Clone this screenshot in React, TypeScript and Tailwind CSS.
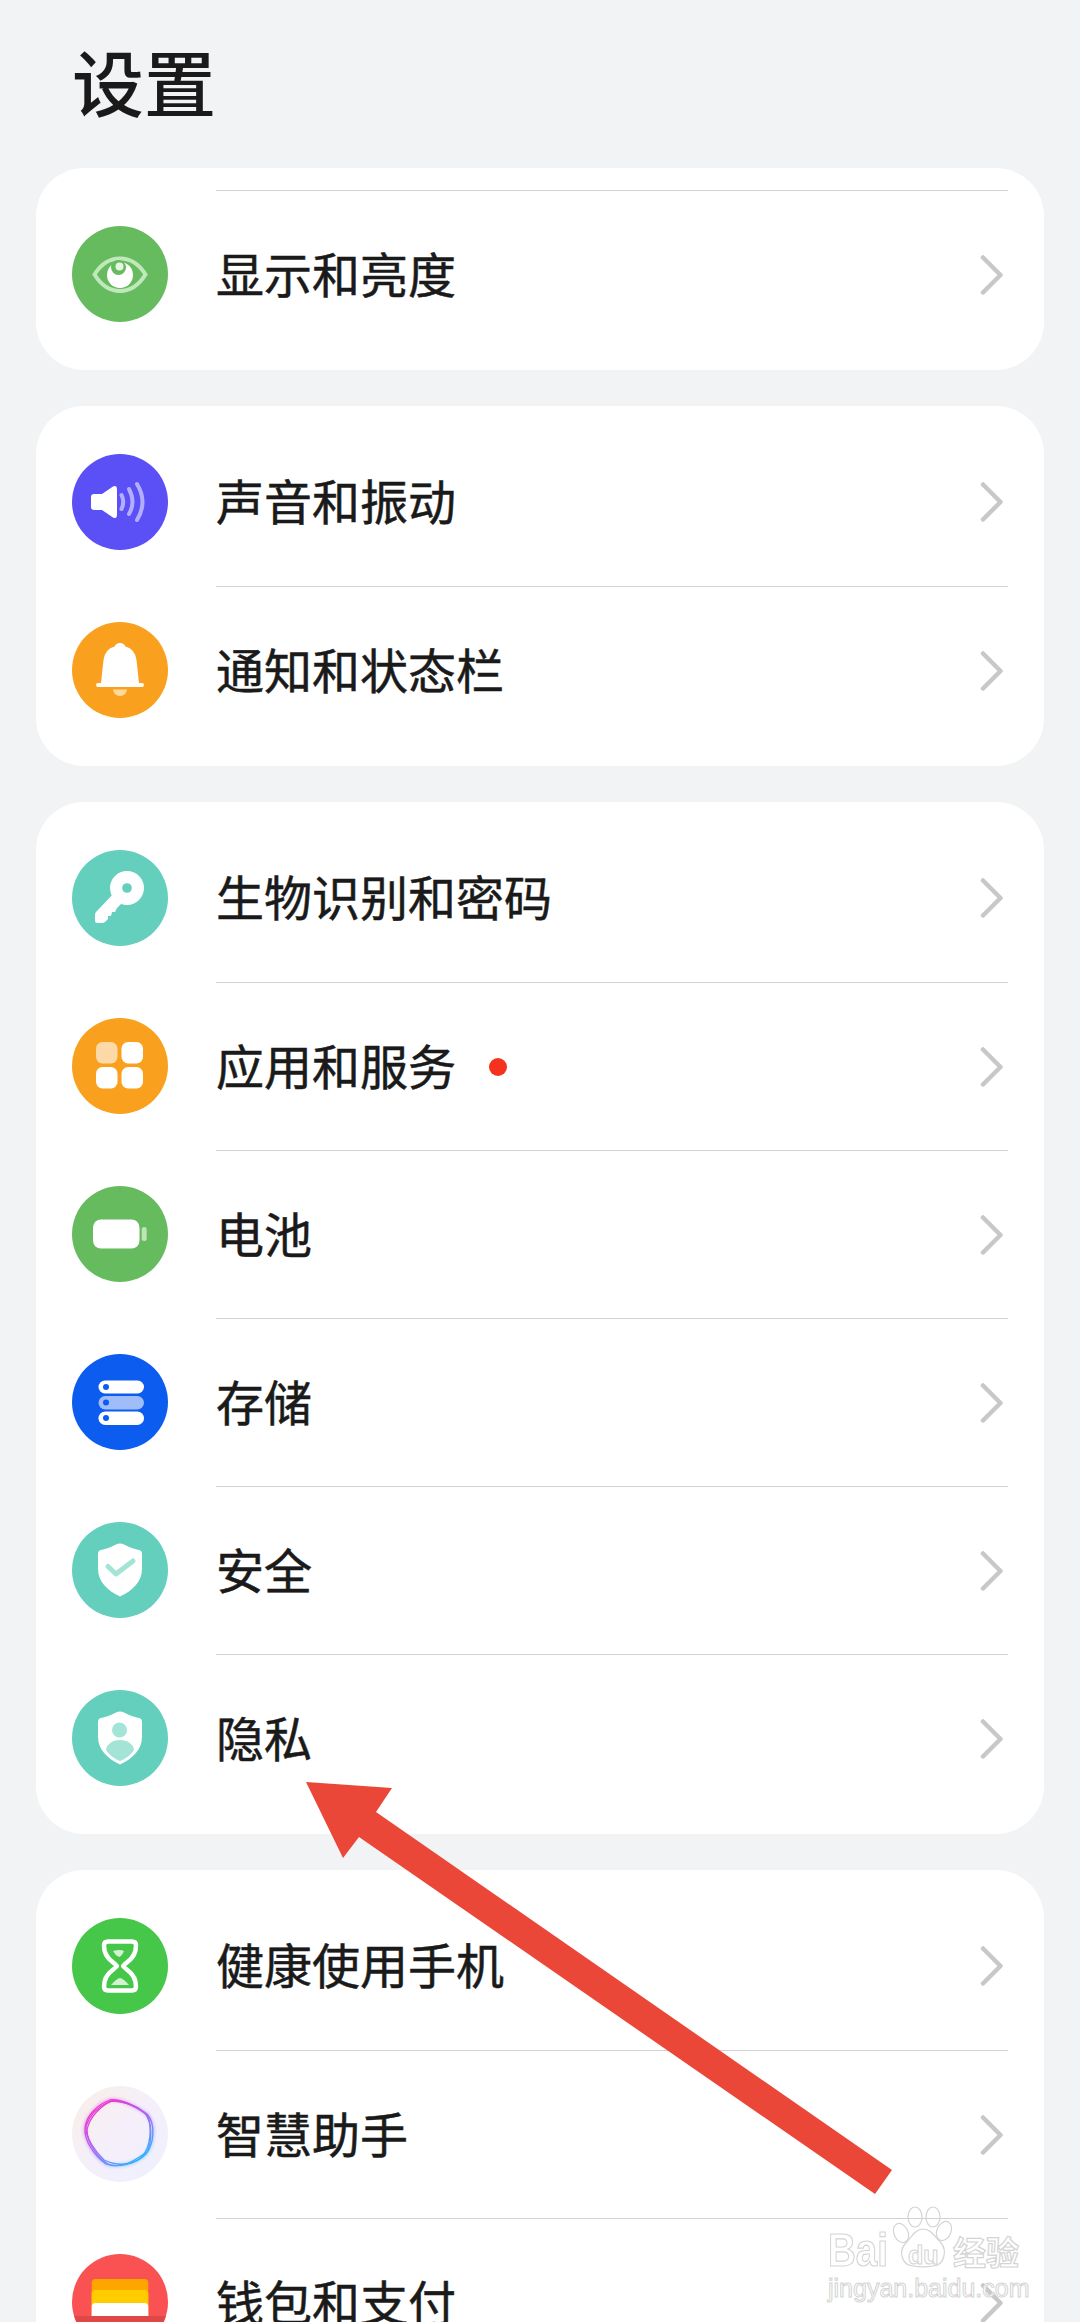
import type { ReactNode } from 'react';

const TEAL = '#64cfbd';
const SHIELD = 'M48 21.500Q51 21.500 54 23.500C58 26 63 27 67 28Q70 28.700 70 32V47C70 60 60 69 48 74.500C36 69 26 60 26 47V32Q26 28.700 29 28C33 27 38 26 42 23.500Q45 21.500 48 21.500Z';

function Circle({ bg, children }: { bg: string; children: ReactNode }) {
  return (
    <div className="h-24 w-24 shrink-0 overflow-hidden rounded-full" style={{ backgroundColor: bg }}>
      <svg viewBox="0 0 96 96" className="h-24 w-24" fill="none">
        {children}
      </svg>
    </div>
  );
}

const EyeIcon = () => (
  <Circle bg="#66bb5f">
    <path d="M22.500 48.500C29 38 38 32.500 48 32.500S67 38 73.500 48.500C67 59 58 65 48 65S29 59 22.500 48.500Z" stroke="#c0e8bb" strokeWidth="4" />
    <circle cx="48" cy="49" r="13" fill="#fff" />
    <circle cx="46.500" cy="41.500" r="7.500" fill="#66bb5f" />
    <circle cx="47.500" cy="40.500" r="4" fill="#e4f5e2" />
  </Circle>
);

const SoundIcon = () => (
  <Circle bg="#5a50f5">
    <path d="M22 40h8l11-7.500q4-2 4 3v25q0 5-4 3L30 56h-8q-3 0-3-3V43q0-3 3-3Z" fill="#fff" />
    <g stroke="#b3aeff" strokeWidth="4" strokeLinecap="round">
      <path d="M49.500 41Q53 48 49.500 55" />
      <path d="M57 35Q64 48 57 60" />
      <path d="M65 30Q76 48 65 66" />
    </g>
  </Circle>
);

const BellIcon = () => (
  <Circle bg="#f9a11e">
    <path d="M48 21q4 0 5.500 3.500Q63 27 64.500 38L67 61h3q2 0 2 2t-2 2H26q-2 0-2-2t2-2h3l2.500-23Q33 27 42.500 24.500 44 21 48 21Z" fill="#fff" />
    <path d="M41 67.500h14Q54 74 48 74t-7-6.500Z" fill="#fdd9a0" />
  </Circle>
);

const KeyIcon = () => (
  <Circle bg={TEAL}>
    <path d="M43 42 24 62q-1 1-1 3v6q0 2 2 2h5q2 0 3-1l3-3v-3h3l1-4h3l2-4 8-8Z" fill="#fff" />
    <circle cx="55" cy="38" r="17" fill="#fff" />
    <circle cx="55" cy="38" r="4.800" fill={TEAL} />
  </Circle>
);

const AppsIcon = () => (
  <Circle bg="#f9a11e">
    <rect x="24" y="24" width="21.500" height="21.500" rx="6.500" fill="#fdd9a8" />
    <rect x="49.500" y="24" width="21.500" height="21.500" rx="6.500" fill="#fff" />
    <rect x="24" y="49" width="21.500" height="21.500" rx="6.500" fill="#fff" />
    <rect x="49.500" y="49" width="21.500" height="21.500" rx="6.500" fill="#fff" />
  </Circle>
);

const BatteryIcon = () => (
  <Circle bg="#66bb5f">
    <rect x="21" y="33.500" width="46.500" height="29" rx="8" fill="#fff" />
    <rect x="69.700" y="41" width="5" height="14" rx="2.500" fill="#bde5b8" />
  </Circle>
);

const StorageIcon = () => (
  <Circle bg="#0d5cf0">
    <rect x="26.500" y="26.500" width="45.500" height="13" rx="6.500" fill="#fff" />
    <rect x="26.500" y="42" width="45.500" height="13.500" rx="6.750" fill="#9ebdf9" />
    <rect x="26.500" y="57.500" width="45.500" height="13.500" rx="6.750" fill="#fff" />
    <circle cx="34" cy="33" r="3" fill="#0d5cf0" />
    <circle cx="34" cy="48.500" r="3" fill="#0d5cf0" />
    <circle cx="34" cy="64" r="3" fill="#0d5cf0" />
  </Circle>
);

const SafeIcon = () => (
  <Circle bg={TEAL}>
    <path d={SHIELD} fill="#fff" />
    <path d="M36 44.500 44 52 61 39" stroke="#a3e4d7" strokeWidth="5" strokeLinecap="round" strokeLinejoin="round" />
  </Circle>
);

const PrivacyIcon = () => (
  <Circle bg={TEAL}>
    <path d={SHIELD} fill="#fff" />
    <circle cx="47.500" cy="40" r="7.500" fill="#a3e4d7" />
    <path d="M48 50c8 0 14 5 14 10-3 5-9 9-14 11-5-2-11-6-14-11 0-5 6-10 14-10Z" fill="#a3e4d7" />
  </Circle>
);

const HourglassIcon = () => (
  <Circle bg="#46c74a">
    <path
      d="M36 23.500h24q4 0 4 4 0 10-8 16-5 4-5 4.500t5 4.500q8 6 8 16 0 4-4 4H36q-4 0-4-4 0-10 8-16 5-4 5-4.500t-5-4.500q-8-6-8-16 0-4 4-4Z"
      stroke="#fff"
      strokeWidth="4.500"
    />
    <path d="M41 33q7-2 11 0-2 5-5 6-4-2-6-6Z" fill="#d3f2d4" />
    <path d="M39 67q5-6 9-7 4 1 9 7Z" fill="#d3f2d4" />
  </Circle>
);

const RING_A = 'M38 14C50 12 66 22 75 28C84 38 82 58 74 68C64 78 46 82 34 78C22 70 12 54 13 42C14 30 26 18 38 14Z';
const RING_B = 'M40 15C52 15 64 20 72 26C81 36 80 56 75 66C66 72 54 82 38 79C26 74 15 56 15 44C17 32 28 20 40 15Z';
const RING_C = 'M36 16C46 13 62 18 76 30C80 42 79 60 70 71C60 80 44 80 32 74C24 66 13 52 14 40C18 28 28 20 36 16Z';

const AssistantIcon = () => (
  <div className="h-24 w-24 shrink-0 rounded-full bg-gradient-to-br from-[#f8efe6] via-[#f5effb] to-[#edf1fd]">
    <svg viewBox="0 0 96 96" className="h-24 w-24" fill="none">
      <defs>
        <linearGradient id="ring" x1="0.2" y1="0.05" x2="0.8" y2="0.95">
          <stop offset="0" stopColor="#f02fd0" />
          <stop offset="0.5" stopColor="#a868f5" />
          <stop offset="1" stopColor="#2fb0ff" />
        </linearGradient>
      </defs>
      <path d={RING_A} stroke="url(#ring)" strokeWidth="3.500" opacity="0.35" className="blur-[1.5px]" />
      <g stroke="url(#ring)" strokeWidth="1.300">
        <path d={RING_A} />
        <path d={RING_B} />
        <path d={RING_C} />
      </g>
    </svg>
  </div>
);

const WalletIcon = () => (
  <Circle bg="#fa5252">
    <rect x="19.700" y="25" width="56.600" height="30" rx="4" fill="#ffa500" />
    <rect x="19.700" y="36" width="56.600" height="30" rx="4" fill="#ffcc00" />
    <rect x="19.700" y="49" width="56.600" height="20" rx="4" fill="#fff" />
    <rect x="0" y="62" width="96" height="34" fill="#e04848" />
  </Circle>
);

type Item = { icon: ReactNode; label: string; dot?: boolean };

const groups: { items: Item[]; topLine?: boolean }[] = [
  { topLine: true, items: [{ icon: <EyeIcon />, label: '显示和亮度' }] },
  {
    items: [
      { icon: <SoundIcon />, label: '声音和振动' },
      { icon: <BellIcon />, label: '通知和状态栏' },
    ],
  },
  {
    items: [
      { icon: <KeyIcon />, label: '生物识别和密码' },
      { icon: <AppsIcon />, label: '应用和服务', dot: true },
      { icon: <BatteryIcon />, label: '电池' },
      { icon: <StorageIcon />, label: '存储' },
      { icon: <SafeIcon />, label: '安全' },
      { icon: <PrivacyIcon />, label: '隐私' },
    ],
  },
  {
    items: [
      { icon: <HourglassIcon />, label: '健康使用手机' },
      { icon: <AssistantIcon />, label: '智慧助手' },
      { icon: <WalletIcon />, label: '钱包和支付' },
    ],
  },
];

function Row({ item, line }: { item: Item; line: boolean }) {
  return (
    <div className="flex h-[168px] items-center px-9">
      {item.icon}
      <div className={`ml-12 flex h-full flex-1 items-center pr-1 ${line ? 'border-t-[1.5px] border-[#d2d2d2]' : ''}`}>
        <span className="mb-[6px] text-[48px] leading-none text-[#1a1a1a] [-webkit-text-stroke:0.5px_#1a1a1a]">{item.label}</span>
        {item.dot && <span className="ml-[33px] h-[18px] w-[18px] rounded-full bg-[#f5321e]" />}
        <svg viewBox="0 0 24 40" className="ml-auto h-10 w-6" fill="none">
          <path d="M3 2.500 20.500 20 3 37.500" stroke="#c8c8c8" strokeWidth="4.500" strokeLinecap="round" strokeLinejoin="round" />
        </svg>
      </div>
    </div>
  );
}

function Watermark() {
  return (
    <div className="absolute left-[828px] top-[2205px] h-[96px] w-[195px] whitespace-nowrap text-white">
      <svg viewBox="0 0 70 66" className="absolute left-[60px] top-0 h-[66px] w-[70px]" fill="none" stroke="#d4d4d4" strokeWidth="1.200">
        <ellipse cx="27" cy="12" rx="7" ry="10" />
        <ellipse cx="45" cy="12" rx="7" ry="10" />
        <ellipse cx="13" cy="28" rx="7" ry="10" transform="rotate(-25 13 28)" />
        <ellipse cx="56" cy="26" rx="7" ry="10" transform="rotate(25 56 26)" />
        <path d="M35 24c8 0 12 8 18 14 6 7 4 22-8 23-6 1-14 1-20 0C13 60 11 46 17 39c6-6 10-15 18-15Z" />
      </svg>
      <span className="absolute left-0 top-[22px] origin-left scale-x-[0.82] font-['Liberation_Sans',sans-serif] text-[47px] font-bold leading-[46px] [-webkit-text-stroke:1.2px_#d4d4d4]">Bai</span>
      <span className="absolute left-[80px] top-[36px] font-['Liberation_Sans',sans-serif] text-[25px] font-bold leading-[28px] [-webkit-text-stroke:1px_#d4d4d4]">du</span>
      <span className="absolute left-[125px] top-[26px] text-[33px] font-bold leading-[40px] [-webkit-text-stroke:1.2px_#d4d4d4]">经验</span>
      <span className="absolute left-0 top-[69px] font-['Liberation_Sans',sans-serif] text-[25px] leading-[28px] [-webkit-text-stroke:1px_#d4d4d4]">jingyan.baidu.com</span>
    </div>
  );
}

export default function App() {
  return (
    <div className="relative h-[2322px] w-[1080px] overflow-hidden bg-[#f1f3f5] font-['Noto_Sans_CJK_SC','Noto_Sans',sans-serif]">
      {/* Title */}
      <h1 className="pl-[72px] pt-[40px] pb-[48px] text-[72px] font-medium leading-[80px] text-[#1a1a1a]">设置</h1>

      {/* Setting groups */}
      <div className="flex flex-col gap-9 px-9">
        {groups.map((group, g) => (
          <div key={g} className={`rounded-[48px] bg-white pb-3 ${group.topLine ? 'pt-[22px]' : 'pt-3'}`}>
            {group.items.map((item, i) => (
              <Row key={item.label} item={item} line={i > 0 || !!group.topLine} />
            ))}
          </div>
        ))}
      </div>

      {/* Annotation arrow */}
      <svg className="absolute left-0 top-0 h-[2322px] w-[1080px]" viewBox="0 0 1080 2322">
        <polygon points="306,1782 392,1788 376,1812 892,2170 875,2194 359,1837 343,1858" fill="#ea4738" />
      </svg>

      <Watermark />
    </div>
  );
}
